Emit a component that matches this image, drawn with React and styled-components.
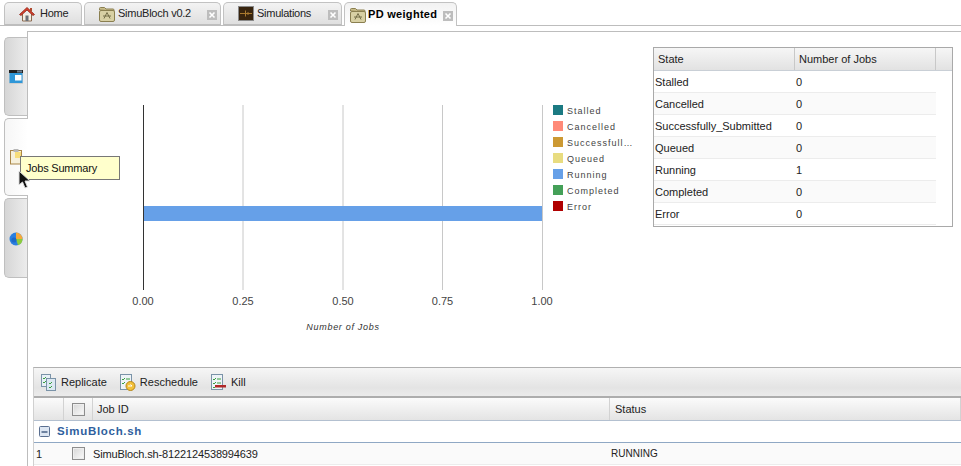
import styled, { createGlobalStyle } from 'styled-components'

const GlobalStyle = createGlobalStyle`
  html, body {
    margin: 0;
    padding: 0;
    background: #fff;
    font-family: "Liberation Sans", Arial, sans-serif;
    font-size: 11px;
    color: #222;
  }
`

const Page = styled.div`
  position: relative;
  display: flex;
  flex-direction: column;
  width: 961px;
  height: 466px;
  overflow: hidden;
`

const TabBar = styled.div`
  display: flex;
  gap: 2px;
  height: 23px;
  padding: 2px 0 0 4px;
  border-bottom: 1px solid #bdbdbd;
  flex: none;
`

const Tab = styled.div`
  display: flex;
  align-items: center;
  box-sizing: border-box;
  width: ${p => p.$width}px;
  height: ${p => (p.$active ? 24 : 23)}px;
  padding-left: ${p => p.$pad}px;
  border: 1px solid #c2c2c2;
  border-bottom: ${p => (p.$active ? 'none' : '1px solid #bdbdbd')};
  border-radius: 5px 5px 0 0;
  background: ${p => (p.$active ? 'linear-gradient(#f2f2f2, #fff)' : 'linear-gradient(#f3f3f3, #dfdfdf)')};
  font-size: 11px;
  font-weight: ${p => (p.$active ? 'bold' : 'normal')};
  letter-spacing: ${p => (p.$active ? '0.3px' : '-0.25px')};
  color: ${p => (p.$active ? '#000' : '#222')};
  position: relative;
  z-index: ${p => (p.$active ? 1 : 0)};
`

const TabLabel = styled.span`
  margin-left: ${p => p.$gap}px;
  width: ${p => p.$width}px;
  white-space: nowrap;
  padding-bottom: 2px;
`

const CloseBox = styled.svg`
  width: 10px;
  height: 10px;
  flex: none;
  margin-top: 3px;
`

const Body = styled.div`
  display: flex;
  flex: 1;
  min-height: 0;
  padding-top: 5px;
`

const SideTabs = styled.div`
  display: flex;
  flex-direction: column;
  gap: 2px;
  flex: none;
  box-sizing: border-box;
  width: 27px;
  padding: 6px 0 0 4px;
`

const SideTab = styled.div`
  display: flex;
  align-items: center;
  justify-content: center;
  box-sizing: border-box;
  width: ${p => (p.$active ? 24 : 23)}px;
  height: ${p => p.$height}px;
  padding-right: 1px;
  border: 1px solid #bfbfbf;
  border-right: none;
  border-radius: 5px 0 0 5px;
  background: ${p => (p.$active ? 'linear-gradient(90deg, #f6f6f6, #fff)' : 'linear-gradient(90deg, #d6d6d6, #ececec)')};
  position: relative;
  z-index: ${p => (p.$active ? 1 : 0)};
`

const Main = styled.div`
  display: flex;
  flex-direction: column;
  flex: 1;
  min-width: 0;
  border-left: 1px solid #bdbdbd;
  border-top: 1px solid #bdbdbd;
`

const Summary = styled.div`
  display: flex;
  flex: none;
  height: 335px;
`

const Chart = styled.svg`
  display: block;
  width: 625px;
  height: 335px;
  flex: none;
  font-family: "Liberation Sans", Arial, sans-serif;
`

const StateTable = styled.div`
  box-sizing: border-box;
  width: 300px;
  height: 180px;
  margin-top: 15px;
  border: 1px solid #a9a9a9;
  flex: none;
`

const StateHead = styled.div`
  display: grid;
  grid-template-columns: 141px 141px 1fr;
  height: 23px;
  box-sizing: border-box;
  border-bottom: 1px solid #c9cfd6;
  background: linear-gradient(#f6f6f6, #e2e2e2);
`

const StateHeadCell = styled.div`
  display: flex;
  align-items: center;
  padding-left: 4px;
  border-right: 1px solid #c8c8c8;
  font-size: 11px;
  &:last-child {
    border-right: none;
  }
`

const StateRow = styled.div`
  display: grid;
  grid-template-columns: 141px 141px;
  width: 282px;
  height: 22px;
  box-sizing: border-box;
  border-bottom: 1px solid #ececec;
  background: ${p => (p.$odd ? '#fafafa' : '#fff')};
  font-size: 11px;
  align-items: center;
`

const StateCell = styled.div`
  padding-left: 1px;
`

const GridPanel = styled.div`
  display: flex;
  flex-direction: column;
  flex: 1;
  margin-left: 5px;
  border-left: 1px solid #d0d0d0;
  border-top: 1px solid #b0b0b0;
`

const Toolbar = styled.div`
  display: flex;
  align-items: center;
  height: 28px;
  padding-left: 7px;
  flex: none;
  background: linear-gradient(#f6f6f6, #e4e4e4 70%, #ebebeb);
  border-bottom: 2px solid #adadad;
`

const ToolButton = styled.div`
  display: flex;
  align-items: center;
  gap: 4px;
  margin-right: 13px;
  font-size: 11px;
`

const ToolIcon = styled.svg`
  width: 16px;
  height: 17px;
  flex: none;
`

const GridHead = styled.div`
  display: grid;
  grid-template-columns: 30px 29px 517px 1fr;
  height: 23px;
  box-sizing: border-box;
  flex: none;
  border-bottom: 1px solid #b3c0d0;
  background: linear-gradient(#fbfbfb, #e4e4e4);
`

const HeadCell = styled.div`
  display: flex;
  align-items: center;
  justify-content: ${p => (p.$center ? 'center' : 'flex-start')};
  padding-left: ${p => p.$pad || 0}px;
  border-right: 1px solid #d2d2d2;
  font-size: 11px;
`

const GroupRow = styled.div`
  display: flex;
  align-items: center;
  gap: 7px;
  height: 22px;
  box-sizing: border-box;
  flex: none;
  padding-left: 5px;
  border-bottom: 1px solid #8fa8c4;
`

const GroupTitle = styled.span`
  padding-bottom: 1px;
  font-size: 11.5px;
  font-weight: bold;
  letter-spacing: 0.7px;
  color: #2f5f9e;
`

const JobRow = styled.div`
  display: grid;
  grid-template-columns: 30px 29px 518px 1fr;
  height: 22px;
  box-sizing: border-box;
  align-items: center;
  flex: none;
  background: #fafafa;
  border-bottom: 1px solid #ececec;
  font-size: 11px;
`

const RowNumber = styled.div`
  padding-left: 2px;
`

const CheckCell = styled.div`
  display: flex;
  justify-content: center;
`

const CheckBox = styled.div`
  width: 11px;
  height: 11px;
  border: 1px solid #8d8d8d;
  background: linear-gradient(135deg, #d6d6d6, #fbfbfb);
  box-shadow: inset 0 0 0 1px #eee;
`

const JobId = styled.div`
  letter-spacing: -0.14px;
`

const JobStatus = styled.div`
  font-size: 10px;
`

const Tooltip = styled.div`
  position: absolute;
  left: 20px;
  top: 156px;
  box-sizing: border-box;
  width: 100px;
  height: 24px;
  display: flex;
  align-items: center;
  padding-left: 5px;
  background: #ffffcc;
  border: 1px solid #777;
  font-size: 11px;
  letter-spacing: -0.2px;
  color: #111;
  z-index: 5;
`

const Cursor = styled.svg`
  position: absolute;
  left: 18px;
  top: 170px;
  width: 13px;
  height: 19px;
  z-index: 6;
`

function HomeIcon() {
  return (
    <svg width="16" height="16" viewBox="0 0 16 16">
      <path d="M3.5 8v7h9V8" fill="#f3ede2" stroke="#8a6a50" strokeWidth="1" />
      <rect x="6.5" y="9.5" width="3" height="5.5" fill="#6a7078" />
      <path d="M0.5 8.5 8 1.5l7.5 7-1.5 1L8 4 2 9.5z" fill="#d8402c" stroke="#8c2418" strokeWidth="0.8" />
      <rect x="11" y="2" width="2" height="3.5" fill="#b04a30" />
    </svg>
  )
}

function FolderIcon() {
  return (
    <svg width="16" height="16" viewBox="0 0 16 16">
      <path d="M0.5 4V2.5q0-1 1-1h4l1.5 1.5h7q1 0 1 1V5z" fill="#c9bd8a" stroke="#8a7f50" />
      <rect x="0.5" y="4.5" width="15" height="11" rx="1.5" fill="#d8d0a4" stroke="#8a7f50" />
      <path d="M8 6.5 5 12.5M8 6.5l3 6M4 10h8" fill="none" stroke="#77704a" strokeWidth="1" />
    </svg>
  )
}

function SimulationIcon() {
  return (
    <svg width="16" height="15" viewBox="0 0 16 15">
      <rect x="0.5" y="0.5" width="15" height="14" fill="#38240e" stroke="#8a8a8a" />
      <path d="M2 7.5h12M7.5 4.5v6M10 6v3" fill="none" stroke="#a9792e" strokeWidth="1" />
    </svg>
  )
}

function CloseIcon() {
  return (
    <CloseBox viewBox="0 0 10 10">
      <rect width="10" height="10" fill="#bdbdbd" />
      <path d="M2.5 2.5l5 5M7.5 2.5l-5 5" stroke="#fff" strokeWidth="1.6" />
    </CloseBox>
  )
}

function WindowIcon() {
  return (
    <svg width="14" height="14" viewBox="0 0 14 14">
      <rect width="14" height="14" fill="#cfcfcf" />
      <rect x="0" y="0" width="14" height="3" fill="#222" />
      <rect x="8" y="0.5" width="5" height="2" fill="#6b7f90" />
      <rect x="0.5" y="3" width="13" height="10" fill="#2f97d8" />
      <rect x="6" y="5" width="6.5" height="5.5" fill="#fff" />
    </svg>
  )
}

function ClipboardIcon() {
  return (
    <svg width="13" height="16" viewBox="0 0 13 16">
      <rect x="0.5" y="1.5" width="11" height="13.5" fill="#f6f0dc" stroke="#a98648" />
      <rect x="3.5" y="0" width="5" height="3" fill="#b7b7b7" />
      <rect x="5" y="3" width="6" height="6" fill="#f7dd7c" />
    </svg>
  )
}

function PieIcon() {
  return (
    <svg width="14" height="15" viewBox="0 0 14 15">
      <circle cx="7" cy="8" r="6.5" fill="#2a7fe0" />
      <path d="M7 8V1.5A6.5 6.5 0 0 1 13.5 8z" fill="#f6a93a" />
      <path d="M7 8h6.5A6.5 6.5 0 0 1 9 14.2z" fill="#8ccc3c" />
      <circle cx="5" cy="9" r="2.6" fill="#0f4fa8" opacity="0.45" />
    </svg>
  )
}

function ReplicateIcon() {
  return (
    <ToolIcon viewBox="0 0 16 17">
      <rect x="0.5" y="0.5" width="9" height="12" fill="#e8f0f6" stroke="#7a93a8" />
      <rect x="5.5" y="4.5" width="9" height="12" fill="#dce8f2" stroke="#7a93a8" />
      <path d="M2 4l1 1 2-2M2 8l1 1 2-2M8 9l1 1 2-2M8 13l1 1 2-2" fill="none" stroke="#3aa040" strokeWidth="1" />
    </ToolIcon>
  )
}

function RescheduleIcon() {
  return (
    <ToolIcon viewBox="0 0 16 17">
      <rect x="0.5" y="0.5" width="11" height="15" fill="#eef3f7" stroke="#7a93a8" />
      <path d="M2 5l1 1 2-2M2 9l1 1 2-2M6 5h4" fill="none" stroke="#3aa040" strokeWidth="1" />
      <circle cx="10.5" cy="12" r="4.5" fill="#f3c13a" stroke="#b5851a" />
      <path d="M8 12h4l-1.5-1.5" fill="none" stroke="#fff" strokeWidth="1" />
    </ToolIcon>
  )
}

function KillIcon() {
  return (
    <ToolIcon viewBox="0 0 16 17">
      <rect x="0.5" y="0.5" width="11" height="15" fill="#eef3f7" stroke="#7a93a8" />
      <path d="M2 5l1 1 2-2M2 9l1 1 2-2M2 13l1 1 2-2M6 5h4M6 9h4" fill="none" stroke="#3aa040" strokeWidth="1" />
      <rect x="4" y="11" width="11" height="2.5" fill="#b02828" />
    </ToolIcon>
  )
}

function MinusBox() {
  return (
    <svg width="11" height="11" viewBox="0 0 11 11">
      <rect x="0.5" y="0.5" width="10" height="10" rx="1" fill="#dde6f2" stroke="#5a6f90" />
      <path d="M2.5 6h6" stroke="#24406a" strokeWidth="1.2" />
    </svg>
  )
}

const gridLines = [243, 343, 442.5, 542.5]
const ticks = [['0.00', 143], ['0.25', 243], ['0.50', 343], ['0.75', 442.5], ['1.00', 542]]
const legend = [
  ['Stalled', '#1b7a82'],
  ['Cancelled', '#ff8a78'],
  ['Successfull…', '#cc9933'],
  ['Queued', '#e8dc80'],
  ['Running', '#66a0e8'],
  ['Completed', '#44a058'],
  ['Error', '#b00000'],
]

const states = [
  ['Stalled', 0],
  ['Cancelled', 0],
  ['Successfully_Submitted', 0],
  ['Queued', 0],
  ['Running', 1],
  ['Completed', 0],
  ['Error', 0],
]

function JobsChart() {
  return (
    <Chart viewBox="28 32 625 335">
      {gridLines.map(x => (
        <line key={x} x1={x} x2={x} y1="105" y2="290" stroke="#c8c8c8" />
      ))}
      <rect x="143" y="206" width="399" height="15" fill="#66a0e8" />
      <line x1="143.5" x2="143.5" y1="105" y2="290" stroke="#333" />
      {ticks.map(([label, x]) => (
        <text key={label} x={x} y="305" textAnchor="middle" fontSize="11" fill="#444">{label}</text>
      ))}
      <text x="343" y="330" textAnchor="middle" fontSize="9" fontStyle="italic" letterSpacing="0.7" fill="#333">Number of Jobs</text>
      {legend.map(([label, color], i) => (
        <g key={label}>
          <rect x="553" y={105 + i * 16} width="10" height="10" fill={color} />
          <text x="567" y={114 + i * 16} fontSize="9" letterSpacing="1" fill="#444">{label}</text>
        </g>
      ))}
    </Chart>
  )
}

export default function App() {
  return (
    <Page>
      <GlobalStyle />
      <TabBar>
        <Tab $width={78} $pad={14}>
          <HomeIcon />
          <TabLabel $gap={5}>Home</TabLabel>
        </Tab>
        <Tab $width={137} $pad={14}>
          <FolderIcon />
          <TabLabel $gap={3} $width={89}>SimuBloch v0.2</TabLabel>
          <CloseIcon />
        </Tab>
        <Tab $width={119} $pad={14}>
          <SimulationIcon />
          <TabLabel $gap={3} $width={71}>Simulations</TabLabel>
          <CloseIcon />
        </Tab>
        <Tab $active $width={113} $pad={5}>
          <FolderIcon />
          <TabLabel $gap={2} $width={75}>PD weighted</TabLabel>
          <CloseIcon />
        </Tab>
      </TabBar>
      <Body>
        <SideTabs>
          <SideTab $height={79}><WindowIcon /></SideTab>
          <SideTab $active $height={78}><ClipboardIcon /></SideTab>
          <SideTab $height={80}><PieIcon /></SideTab>
        </SideTabs>
        <Main>
          <Summary>
            <JobsChart />
            <StateTable>
              <StateHead>
                <StateHeadCell>State</StateHeadCell>
                <StateHeadCell>Number of Jobs</StateHeadCell>
                <StateHeadCell />
              </StateHead>
              {states.map(([name, count], i) => (
                <StateRow key={name} $odd={i % 2 === 1}>
                  <StateCell>{name}</StateCell>
                  <StateCell>{count}</StateCell>
                </StateRow>
              ))}
            </StateTable>
          </Summary>
          <GridPanel>
            <Toolbar>
              <ToolButton><ReplicateIcon />Replicate</ToolButton>
              <ToolButton><RescheduleIcon />Reschedule</ToolButton>
              <ToolButton><KillIcon />Kill</ToolButton>
            </Toolbar>
            <GridHead>
              <HeadCell />
              <HeadCell $center><CheckBox /></HeadCell>
              <HeadCell $pad={4}>Job ID</HeadCell>
              <HeadCell $pad={5}>Status</HeadCell>
            </GridHead>
            <GroupRow>
              <MinusBox />
              <GroupTitle>SimuBloch.sh</GroupTitle>
            </GroupRow>
            <JobRow>
              <RowNumber>1</RowNumber>
              <CheckCell><CheckBox /></CheckCell>
              <JobId>SimuBloch.sh-8122124538994639</JobId>
              <JobStatus>RUNNING</JobStatus>
            </JobRow>
          </GridPanel>
        </Main>
      </Body>
      <Tooltip>Jobs Summary</Tooltip>
      <Cursor viewBox="0 0 13 19">
        <path d="M1 1v14l3.5-3 2.5 6 2.5-1-2.5-6H12z" fill="#111" stroke="#ddd" strokeWidth="1" />
      </Cursor>
    </Page>
  )
}
